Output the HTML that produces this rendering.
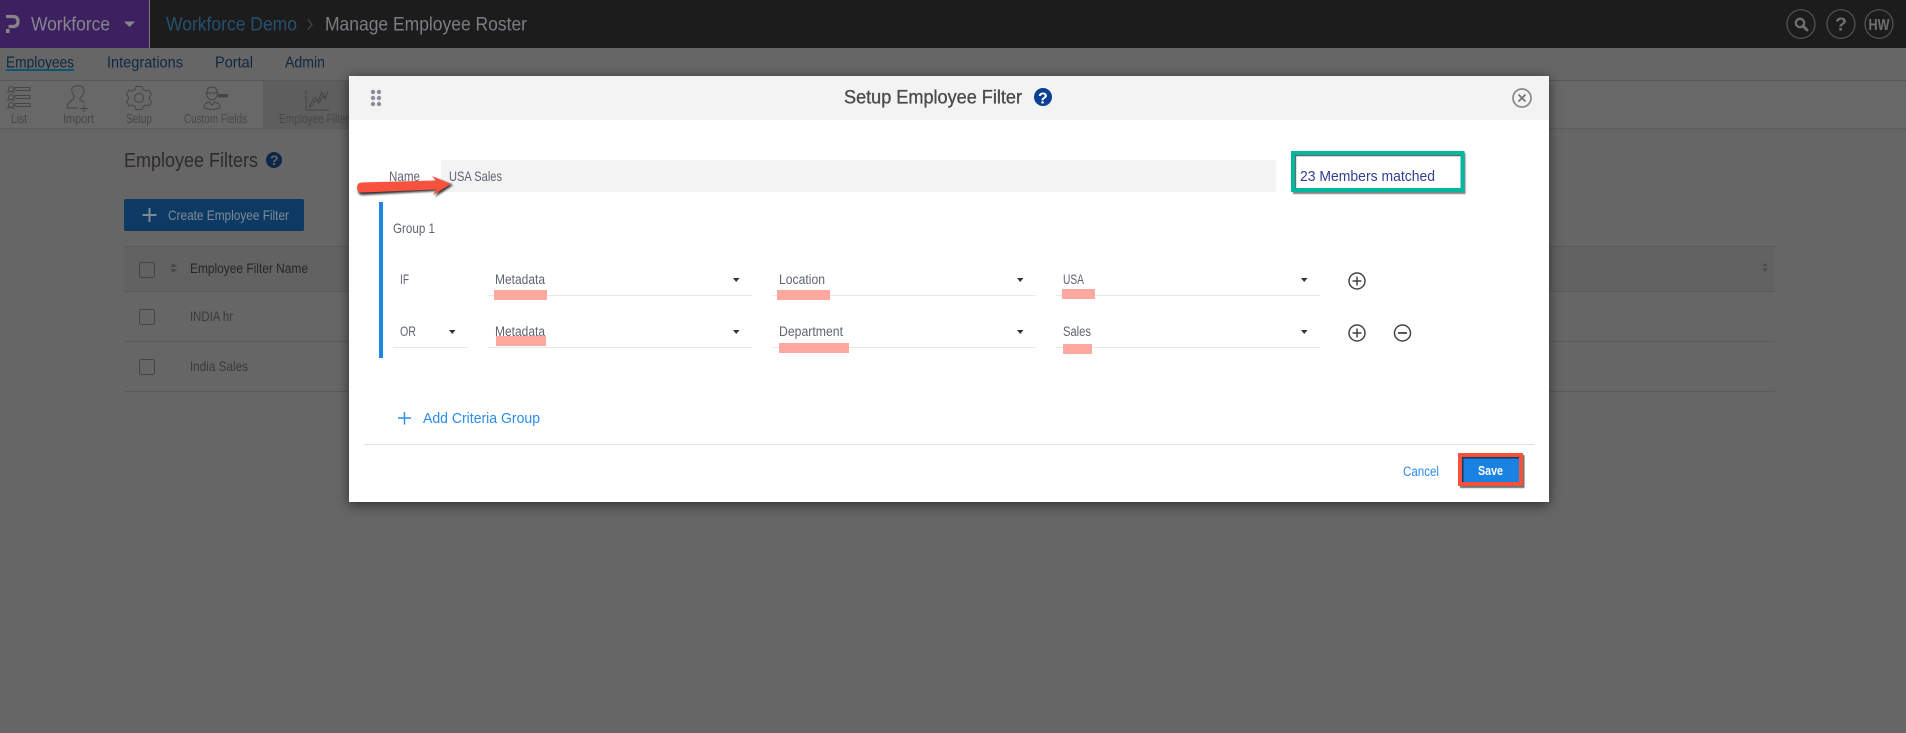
<!DOCTYPE html>
<html><head><meta charset="utf-8"><title>Setup Employee Filter</title>
<style>
html,body{margin:0;padding:0;width:1906px;height:733px;overflow:hidden;background:#666}
svg{display:block;filter:blur(.35px)}
text{font-family:"Liberation Sans",sans-serif}
</style></head><body>
<svg width="1906" height="733" viewBox="0 0 1906 733" xmlns="http://www.w3.org/2000/svg">
<defs>
<filter id="b6" x="-10%" y="-10%" width="120%" height="120%"><feGaussianBlur stdDeviation="6"/></filter>
<filter id="b1" x="-10%" y="-30%" width="120%" height="160%"><feGaussianBlur stdDeviation="1"/></filter>
<filter id="s1" x="-10%" y="-10%" width="120%" height="120%"><feGaussianBlur stdDeviation="0.6"/></filter>
</defs>
<rect width="1906" height="733" fill="#666"/>
<!-- top bar -->
<rect width="1906" height="48" fill="#1c1c1c"/>
<rect width="149" height="48" fill="#3d2060"/>
<rect x="149" width="1" height="48" fill="#777"/>
<path d="M6 16.500H13Q18 16.500 18 21.500Q18 26.500 13 26.500H8.500" fill="none" stroke="#858585" stroke-width="3.200"/>
<rect x="6" y="29" width="3.500" height="4" fill="#858585"/>
<text x="31" y="30.500" font-size="19.500" fill="#86868e" textLength="79" lengthAdjust="spacingAndGlyphs">Workforce</text>
<path d="M124 21.500H135L129.500 27Z" fill="#86868e"/>
<text x="166" y="30.500" font-size="19.500" fill="#27506e" textLength="131" lengthAdjust="spacingAndGlyphs">Workforce Demo</text>
<path d="M308 19.500L312 24.500L308 29.500" fill="none" stroke="#4a4a4a" stroke-width="1.100"/>
<text x="325" y="30.500" font-size="19.500" fill="#7c7d82" textLength="202" lengthAdjust="spacingAndGlyphs">Manage Employee Roster</text>
<ellipse cx="1801" cy="24" rx="14" ry="14.300" fill="none" stroke="#555" stroke-width="1.200"/>
<circle cx="1800" cy="23" r="4.200" fill="none" stroke="#6f6f6f" stroke-width="2.300"/>
<path d="M1803 26L1807 30" stroke="#6f6f6f" stroke-width="3" stroke-linecap="round"/>
<ellipse cx="1841" cy="24" rx="14" ry="14.300" fill="none" stroke="#555" stroke-width="1.200"/>
<text x="1835" y="30.500" font-size="18" font-weight="bold" fill="#6f6f6f" textLength="12" lengthAdjust="spacingAndGlyphs">?</text>
<ellipse cx="1879" cy="24" rx="14" ry="14.300" fill="none" stroke="#555" stroke-width="1.200"/>
<text x="1868.500" y="30" font-size="16" font-weight="bold" fill="#6f6f6f" textLength="21" lengthAdjust="spacingAndGlyphs">HW</text>
<!-- nav -->
<g font-size="16" fill="#0f2842">
<text x="6" y="67.500" textLength="68" lengthAdjust="spacingAndGlyphs">Employees</text>
<text x="107" y="67.500" textLength="76" lengthAdjust="spacingAndGlyphs">Integrations</text>
<text x="215" y="67.500" textLength="38" lengthAdjust="spacingAndGlyphs">Portal</text>
<text x="285" y="67.500" textLength="40" lengthAdjust="spacingAndGlyphs">Admin</text>
</g>
<rect x="6" y="69" width="68" height="2" fill="#0d566f"/>
<!-- subnav -->
<rect y="80" width="1906" height="1" fill="#585858"/>
<rect y="81" width="1906" height="47" fill="#686868"/>
<rect y="128" width="1906" height="1" fill="#5c5c5c"/>
<rect x="263" y="81" width="90" height="47" fill="#5e5e5e"/>
<g fill="none" stroke="#454545" stroke-width="1">
<circle cx="11" cy="89" r="2.500"/><rect x="15" y="87.500" width="15" height="3"/>
<circle cx="11" cy="97" r="2.500"/><rect x="15" y="95.500" width="15" height="3"/>
<circle cx="11" cy="105" r="2.500"/><rect x="15" y="103.500" width="15" height="3"/>
<path d="M7 93Q11 90 15 93M7 101Q11 98 15 101M7 109Q11 106 15 109"/>
<path d="M67 108Q68 101 74 99V96Q71 92 72 88Q75 85 81 86Q85 88 84 92Q82 97 80 98V100Q83 101 84 103M67 108H78M84 105V112M80.500 108.500H88"/>
<path d="M136 86.500H142L143 89.500L146 91L149 90L151.500 94.500L149.500 97V99L151.500 101.500L149 106L146 105L143 106.500L142 109.500H136L135 106.500L132 105L129 106L126.500 101.500L128.500 99V97L126.500 94.500L129 90L132 91L135 89.500Z"/>
<circle cx="139" cy="98" r="4.500"/>
<path d="M207 92Q207 87 212 87Q217 87 217 92V96Q215 100 212 100Q209 100 207 96ZM205 93H219M204 108Q204 103 209 102L212 105L215 102Q220 103 220 108Q212 111 204 108Z"/>
<rect x="218" y="94" width="10" height="3.500" fill="#454545" stroke="none"/>
<path d="M306 90V110H329M309 107L315 97L318 101L322 92L325 98L328 91M310 108L316 100L319 103L323 96L326 100"/>
</g>
<g font-size="12.500" fill="#484848">
<text x="11" y="123" textLength="16" lengthAdjust="spacingAndGlyphs">List</text>
<text x="63" y="123" textLength="31" lengthAdjust="spacingAndGlyphs">Import</text>
<text x="126" y="123" textLength="26" lengthAdjust="spacingAndGlyphs">Setup</text>
<text x="184" y="123" textLength="63" lengthAdjust="spacingAndGlyphs">Custom Fields</text>
<text x="279" y="123" textLength="70" lengthAdjust="spacingAndGlyphs">Employee Filter</text>
</g>
<!-- page -->
<text x="124" y="167" font-size="20" fill="#2e2b29" textLength="134" lengthAdjust="spacingAndGlyphs">Employee Filters</text>
<circle cx="274" cy="160" r="8" fill="#0d2748"/>
<text x="270" y="165" font-size="14" font-weight="bold" fill="#666">?</text>
<rect x="124" y="199" width="180" height="32" rx="2" fill="#0c3a63"/>
<path d="M149.500 208V222M142.500 215H156.500" stroke="#7d8a99" stroke-width="2"/>
<text x="168" y="220" font-size="14" fill="#7d8a99" textLength="121" lengthAdjust="spacingAndGlyphs">Create Employee Filter</text>
<!-- table -->
<rect x="124" y="246" width="1651" height="46" fill="#626262"/>
<rect x="124" y="246" width="1651" height="1" fill="#5a5a5a"/>
<rect x="124" y="291" width="1651" height="1" fill="#5a5a5a"/>
<rect x="124" y="341" width="1651" height="1" fill="#5a5a5a"/>
<rect x="124" y="391" width="1651" height="1" fill="#5a5a5a"/>
<rect x="139.500" y="262.500" width="15" height="15" rx="2" fill="none" stroke="#444"/>
<rect x="139.500" y="309.500" width="15" height="15" rx="2" fill="none" stroke="#444"/>
<rect x="139.500" y="359.500" width="15" height="15" rx="2" fill="none" stroke="#444"/>
<path d="M170 267L173.500 263L177 267ZM170 269L173.500 273L177 269Z" fill="#4a4a4a"/>
<path d="M1762 266L1765 263L1768 266ZM1762 268.500L1765 271.500L1768 268.500Z" fill="#4a4a4a"/>
<text x="190" y="273" font-size="14" fill="#262626" textLength="118" lengthAdjust="spacingAndGlyphs">Employee Filter Name</text>
<text x="190" y="321" font-size="14" fill="#3a3a3a" textLength="43" lengthAdjust="spacingAndGlyphs">INDIA hr</text>
<text x="190" y="371" font-size="14" fill="#3a3a3a" textLength="58" lengthAdjust="spacingAndGlyphs">India Sales</text>
<!-- modal -->
<rect x="349" y="78" width="1200" height="427" fill="#000" opacity=".55" filter="url(#b6)"/>
<rect x="349" y="76" width="1200" height="426" fill="#fff"/>
<rect x="349" y="76" width="1200" height="44" fill="#f3f3f3"/>
<g fill="#8b8f98">
<circle cx="373" cy="92" r="2.200"/><circle cx="379" cy="92" r="2.200"/>
<circle cx="373" cy="98" r="2.200"/><circle cx="379" cy="98" r="2.200"/>
<circle cx="373" cy="104" r="2.200"/><circle cx="379" cy="104" r="2.200"/>
</g>
<text x="844" y="103.500" font-size="19" fill="#4b4b4b" stroke="#4b4b4b" stroke-width=".35" textLength="178" lengthAdjust="spacingAndGlyphs">Setup Employee Filter</text>
<circle cx="1043" cy="97" r="9" fill="#0a4093"/>
<text x="1038" y="103.500" font-size="16" font-weight="bold" fill="#fff">?</text>
<circle cx="1522" cy="98" r="9" fill="none" stroke="#8c8c8c" stroke-width="1.800"/>
<path d="M1518.500 94.500L1525.500 101.500M1525.500 94.500L1518.500 101.500" stroke="#777" stroke-width="1.800"/>
<!-- name row -->
<text x="389" y="181" font-size="14" fill="#5e6470" textLength="31" lengthAdjust="spacingAndGlyphs">Name</text>
<rect x="441" y="160" width="835" height="32" fill="#f3f3f3"/>
<text x="449" y="181" font-size="14" fill="#5e6470" textLength="53" lengthAdjust="spacingAndGlyphs">USA Sales</text>
<path d="M362 184L437 182L434 178L453 185L435 197L438 191L362 195Q358 195 358 189.500Q358 184 362 184Z" fill="#111" opacity=".85" filter="url(#b1)"/>
<path d="M362 182.500L436 180.500L432 176L451 184L433 195L436 189.500L362 192.500Q357 192.500 357 187.500Q357 182.500 362 182.500Z" fill="#f8523f"/>
<!-- members box -->
<rect x="1293" y="153" width="172.500" height="41" fill="#333" opacity=".6" filter="url(#s1)"/>
<rect x="1291" y="151" width="173.500" height="41" fill="#00b89f"/>
<rect x="1295" y="155" width="165.500" height="33" fill="#fff"/>
<path d="M1295 155H1460.500V156.200H1296.200V188H1295Z" fill="#666"/>
<text x="1300" y="181" font-size="14.500" fill="#2f4091" textLength="135" lengthAdjust="spacingAndGlyphs">23 Members matched</text>
<!-- group -->
<rect x="379" y="202" width="4" height="156" fill="#1a87e8"/>
<text x="393" y="233" font-size="14" fill="#5e6470" textLength="42" lengthAdjust="spacingAndGlyphs">Group 1</text>
<g fill="#e9e9e9">
<rect x="488" y="295" width="264" height="1"/><rect x="772" y="295" width="264" height="1"/><rect x="1056" y="295" width="264" height="1"/>
<rect x="393" y="347" width="75" height="1"/><rect x="488" y="347" width="264" height="1"/><rect x="772" y="347" width="264" height="1"/><rect x="1056" y="347" width="264" height="1"/>
</g>
<g font-size="13.500" fill="#5e6470">
<text x="400" y="284" textLength="9" lengthAdjust="spacingAndGlyphs">IF</text>
<text x="400" y="336" textLength="16" lengthAdjust="spacingAndGlyphs">OR</text>
<text x="495" y="284" textLength="50" lengthAdjust="spacingAndGlyphs">Metadata</text>
<text x="779" y="284" textLength="46" lengthAdjust="spacingAndGlyphs">Location</text>
<text x="1063" y="284" textLength="21" lengthAdjust="spacingAndGlyphs">USA</text>
<text x="495" y="336" textLength="50" lengthAdjust="spacingAndGlyphs">Metadata</text>
<text x="779" y="336" textLength="64" lengthAdjust="spacingAndGlyphs">Department</text>
<text x="1063" y="336" textLength="28" lengthAdjust="spacingAndGlyphs">Sales</text>
</g>
<g fill="#333">
<path d="M733 278H739.500L736.200 282Z"/><path d="M1017 278H1023.500L1020.200 282Z"/><path d="M1301 278H1307.500L1304.200 282Z"/>
<path d="M449 330H455.500L452.200 334Z"/><path d="M733 330H739.500L736.200 334Z"/><path d="M1017 330H1023.500L1020.200 334Z"/><path d="M1301 330H1307.500L1304.200 334Z"/>
</g>
<g fill="#ffa8a0">
<rect x="494" y="290" width="53" height="10"/><rect x="777" y="290" width="53" height="10"/><rect x="1062" y="289" width="33" height="10"/>
<rect x="496" y="336" width="50" height="10"/><rect x="779" y="343" width="70" height="10"/><rect x="1063" y="344" width="29" height="10"/>
</g>
<g fill="none" stroke="#444" stroke-width="1.500">
<circle cx="1357" cy="281" r="8"/><path d="M1357 276.500V285.500M1352.500 281H1361.500"/>
<circle cx="1357" cy="333" r="8"/><path d="M1357 328.500V337.500M1352.500 333H1361.500"/>
<circle cx="1402.500" cy="333" r="8"/><path d="M1398 333H1407" stroke-width="1.800"/>
</g>
<path d="M404.500 412V424.500M398 418H411" stroke="#2a8cec" stroke-width="1.400"/>
<text x="423" y="423" font-size="14.500" fill="#2a8cec" textLength="117" lengthAdjust="spacingAndGlyphs">Add Criteria Group</text>
<rect x="364" y="444" width="1170" height="1" fill="#e2e2e2"/>
<text x="1403" y="476" font-size="13.500" fill="#2a8cec" textLength="36" lengthAdjust="spacingAndGlyphs">Cancel</text>
<rect x="1460" y="455" width="64.500" height="33" fill="#333" opacity=".7" filter="url(#s1)"/>
<rect x="1458" y="453" width="65" height="33" fill="#f8523f"/>
<rect x="1462" y="457" width="57" height="25" fill="#1a82e2"/>
<path d="M1462 457H1519V458.500H1463.500V482H1462Z" fill="#123a5c"/>
<text x="1478" y="475" font-size="13" font-weight="bold" fill="#fff" textLength="25" lengthAdjust="spacingAndGlyphs">Save</text>
</svg>
</body></html>
